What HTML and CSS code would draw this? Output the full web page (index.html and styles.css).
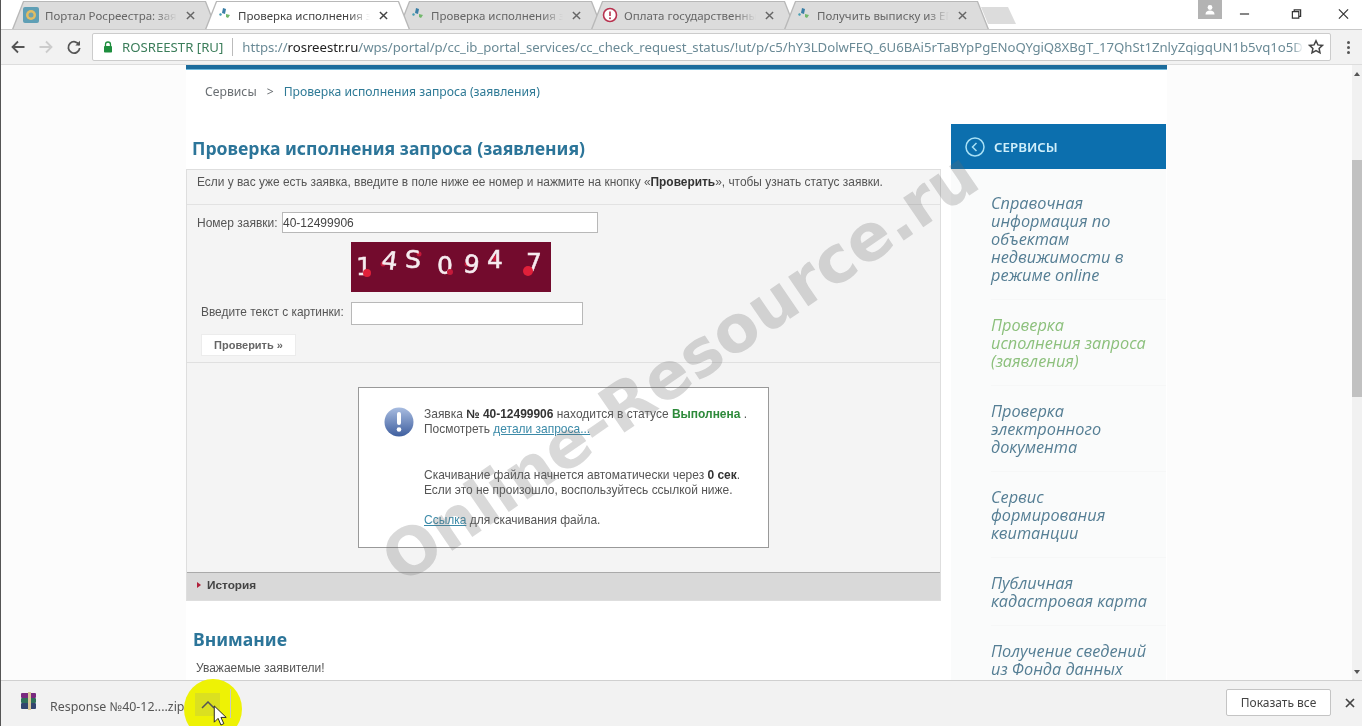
FILE: index.html
```html
<!DOCTYPE html>
<html lang="ru">
<head>
<meta charset="utf-8">
<title>Проверка исполнения запроса</title>
<link rel="stylesheet" href="styles.css">
</head>
<body>
<div class="window">
  <header class="tabstrip">
    <div class="tab">
      <svg class="fav" viewBox="0 0 16 16"><rect width="16" height="16" rx="2" fill="#5f9fb5"/><circle cx="8" cy="8" r="5" fill="#e2bd63"/><circle cx="8" cy="8" r="2.5" fill="#6fa3ae"/></svg>
      <span class="tab-title">Портал Росреестра: зая</span>
      <svg class="tab-x" viewBox="0 0 10 10"><path d="M1 1l8 8M9 1l-8 8"/></svg>
    </div>
    <div class="tab active">
      <svg class="fav" viewBox="0 0 16 16"><path d="M7 1l3 1-1 5-3-1z" fill="#3b7fa6"/><path d="M4 6l2 1-1 2-2-1z" fill="#4aa0b5"/><path d="M10 7l4 1-2 3-2-1z" fill="#73b86c"/></svg>
      <span class="tab-title">Проверка исполнения з</span>
      <svg class="tab-x" viewBox="0 0 10 10"><path d="M1 1l8 8M9 1l-8 8"/></svg>
    </div>
    <div class="tab">
      <svg class="fav" viewBox="0 0 16 16"><path d="M7 1l3 1-1 5-3-1z" fill="#3b7fa6"/><path d="M4 6l2 1-1 2-2-1z" fill="#4aa0b5"/><path d="M10 7l4 1-2 3-2-1z" fill="#73b86c"/></svg>
      <span class="tab-title">Проверка исполнения з</span>
      <svg class="tab-x" viewBox="0 0 10 10"><path d="M1 1l8 8M9 1l-8 8"/></svg>
    </div>
    <div class="tab">
      <svg class="fav" viewBox="0 0 16 16"><circle cx="8" cy="8" r="6.5" fill="#fff" stroke="#b8324f" stroke-width="1.6"/><path d="M8 4.5v4.5" stroke="#b8324f" stroke-width="1.6"/><circle cx="8" cy="11.2" r="1" fill="#b8324f"/></svg>
      <span class="tab-title">Оплата государственны</span>
      <svg class="tab-x" viewBox="0 0 10 10"><path d="M1 1l8 8M9 1l-8 8"/></svg>
    </div>
    <div class="tab">
      <svg class="fav" viewBox="0 0 16 16"><path d="M7 1l3 1-1 5-3-1z" fill="#3b7fa6"/><path d="M4 6l2 1-1 2-2-1z" fill="#4aa0b5"/><path d="M10 7l4 1-2 3-2-1z" fill="#73b86c"/></svg>
      <span class="tab-title">Получить выписку из ЕГ</span>
      <svg class="tab-x" viewBox="0 0 10 10"><path d="M1 1l8 8M9 1l-8 8"/></svg>
    </div>
    <div class="newtab"></div>
    <div class="winctl">
      <div class="avatar"><svg viewBox="0 0 12 12" width="12" height="12"><circle cx="6" cy="3.5" r="2.4" fill="#fff"/><path d="M1.5 10.5c0-3 2-4 4.500-4s4.500 1 4.500 4z" fill="#fff"/></svg></div>
      <svg class="wc wc-min" viewBox="0 0 12 12"><path d="M1 6h10"/></svg>
      <svg class="wc wc-max" viewBox="0 0 12 12"><path d="M1.500 3.500h7v7h-7zM3.500 3.500v-2h7v7h-2"/></svg>
      <svg class="wc wc-close" viewBox="0 0 12 12"><path d="M1 1l10 10M11 1l-10 10"/></svg>
    </div>
  </header>

  <nav class="toolbar">
    <svg class="nav" viewBox="0 0 16 16"><path class="nav-on" d="M14.500 8H2.500M8 2.500L2.500 8 8 13.500"/></svg>
    <svg class="nav" viewBox="0 0 16 16"><path class="nav-off" d="M1.500 8h12M8 2.500L13.500 8 8 13.500"/></svg>
    <svg class="nav" viewBox="0 0 16 16"><path class="nav-on" d="M13.200 6A5.700 5.700 0 1 0 13.700 9"/><path d="M14 1.800v4.700H9.300z" fill="#555"/></svg>
    <div class="omnibox">
      <svg class="lock" viewBox="0 0 10 12"><path d="M2.500 5V3.500a2.500 2.500 0 0 1 5 0V5" fill="none" stroke="#1e8e3e" stroke-width="1.300"/><rect x="1" y="5" width="8" height="6.500" rx=".8" fill="#1e8e3e"/></svg>
      <span class="cert">ROSREESTR [RU]</span>
      <span class="omni-sep"></span>
      <span class="url"><span class="url-dim">https://</span><span class="url-host">rosreestr.ru</span><span class="url-dim">/wps/portal/p/cc_ib_portal_services/cc_check_request_status/!ut/p/c5/hY3LDolwFEQ_6U6BAi5rTaBYpPgENoQYgiQ8XBgT_17QhSt1ZnlyZqigqUN1b5vq1o5D</span></span>
      <svg class="star" viewBox="0 0 16 16"><path d="M8 1.800l1.900 4.100 4.500.5-3.300 3 .9 4.400L8 11.600l-4 2.200.9-4.400-3.300-3 4.500-.5z"/></svg>
    </div>
    <div class="dots"><i></i><i></i><i></i></div>
  </nav>

  <div class="viewport">
    <div class="page">
      <div class="content">
        <main class="main">
          <div class="topline"></div>
          <div class="crumbs"><span class="crumb-root">Сервисы</span><span class="crumb-gt">&gt;</span><a class="crumb-link">Проверка исполнения запроса (заявления)</a></div>
          <h1 class="title title-1">Проверка исполнения запроса (заявления)</h1>
          <section class="panel">
            <div class="intro">Если у вас уже есть заявка, введите в поле ниже ее номер и нажмите на кнопку «<b>Проверить</b>», чтобы узнать статус заявки.</div>
            <div class="form">
              <div class="row-num"><label>Номер заявки:</label><div class="field field-num">40-12499906</div></div>
              <svg class="captcha" viewBox="0 0 200 50">
                <rect width="200" height="50" fill="#730b2d"/>
                <g class="cap-dots">
                  <circle cx="68" cy="12" r="2.500"/>
                  <circle cx="32" cy="22" r="2.500"/>
                  <circle cx="116" cy="22" r="2.500"/>
                  <circle cx="144" cy="16" r="3"/>
                </g>
                <g class="cap-digits">
                  <text x="5" y="33">1</text>
                  <text x="31" y="27" transform="rotate(8 38 18)">4</text>
                  <text x="54" y="26">S</text>
                  <text x="86" y="32">0</text>
                  <text x="113" y="31" transform="rotate(8 121 20)">9</text>
                  <text x="136" y="26">4</text>
                  <text x="175" y="29">7</text>
                </g>
                <circle cx="16" cy="31" r="4" fill="#e0203a"/>
                <circle cx="99" cy="30" r="3" fill="#c41a3a"/>
                <circle cx="177" cy="29" r="5" fill="#e0203a"/>
              </svg>
              <div class="row-cap"><label>Введите текст с картинки:</label><div class="field field-cap"></div></div>
              <div class="check-btn">Проверить »</div>
            </div>
            <div class="result">
              <div class="notice">
                <svg class="info" viewBox="0 0 30 30">
                  <defs><linearGradient id="ig" x1="0" y1="0" x2="0" y2="1"><stop offset="0" stop-color="#a8bce0"/><stop offset="1" stop-color="#3f5f9f"/></linearGradient></defs>
                  <circle cx="15" cy="15" r="14.500" fill="url(#ig)"/>
                  <rect x="13" y="5" width="4" height="13" rx="2" fill="#fff"/>
                  <circle cx="15" cy="22.500" r="2.300" fill="#fff"/>
                </svg>
                <div class="notice-text">
                  <p>Заявка <b>№ 40-12499906</b> находится в статусе <b class="ok">Выполнена</b> .<br>Посмотреть <a>детали запроса...</a></p>
                  <p class="p-dl">Скачивание файла начнется автоматически через <b>0 сек</b>.<br>Если это не произошло, воспользуйтесь ссылкой ниже.</p>
                  <p class="p-link"><a>Ссылка</a> для скачивания файла.</p>
                </div>
              </div>
            </div>
            <div class="history"><span class="tri"></span>История</div>
          </section>
          <h2 class="title title-2">Внимание</h2>
          <p class="dear">Уважаемые заявители!</p>
        </main>
        <aside class="side">
          <div class="side-head">
            <svg class="side-ico" viewBox="0 0 20 20"><circle cx="10" cy="10" r="9" fill="none" stroke="#a8e0f5" stroke-width="1.500"/><path d="M11.500 6l-4 4 4 4" fill="none" stroke="#a8e0f5" stroke-width="1.500"/></svg>
            <span>СЕРВИСЫ</span>
          </div>
          <ul class="side-list">
            <li>Справочная<br>информация по<br>объектам<br>недвижимости в<br>режиме online</li>
            <li class="cur">Проверка<br>исполнения запроса<br>(заявления)</li>
            <li>Проверка<br>электронного<br>документа</li>
            <li>Сервис<br>формирования<br>квитанции</li>
            <li>Публичная<br>кадастровая карта</li>
            <li>Получение сведений<br>из Фонда данных</li>
          </ul>
        </aside>
      </div>
    </div>
    <div class="scrollbar">
      <span class="sb-up"></span>
      <span class="sb-thumb"></span>
      <span class="sb-down"></span>
    </div>
    <div class="watermark">Online-Resource.ru</div>
  </div>

  <footer class="dlbar">
    <svg class="rar" viewBox="0 0 20 20">
      <rect x="2" y="2" width="15" height="5" rx="1" fill="#7a2a80"/>
      <rect x="2" y="7" width="15" height="5" rx="1" fill="#2f6f5a"/>
      <rect x="2" y="12" width="15" height="6" rx="1" fill="#33456f"/>
      <rect x="9" y="1" width="3" height="18" fill="#d9c79a"/>
    </svg>
    <span class="dl-name">Response №40-12....zip</span>
    <span class="dl-sep"></span>
    <div class="showall">Показать все</div>
    <svg class="dl-x" viewBox="0 0 10 10"><path d="M1 1l8 8M9 1l-8 8"/></svg>
    <div class="spot"><span class="spot-btn"><svg viewBox="0 0 14 8" width="14" height="8"><path d="M1 7l6-6 6 6" fill="none" stroke="#555" stroke-width="1.500"/></svg></span></div>
    <svg class="cursor" viewBox="0 0 14 22"><path d="M1 1v17l4-4 3 7 3-1.500-3-6.500h5.500z" fill="#fff" stroke="#222" stroke-width="1"/></svg>
  </footer>
</div>
</body>
</html>
```
FILE: styles.css
```css
* { box-sizing: border-box; }
html, body { margin: 0; height: 100%; overflow: hidden; background: #fff; }
body { font-family: "Liberation Sans", Arial, sans-serif; }

.window {
  width: 1362px; height: 726px;
  display: flex; flex-direction: column;
  border-left: 1px solid #555;
  filter: blur(.35px);
  position: relative;
  overflow: hidden;
}

/* Tabs */
.tabstrip {
  height: 29px; flex: none;
  display: flex; align-items: flex-end;
  padding-left: 11px;
  background: #fff;
  position: relative;
}
.tab {
  width: 205px; height: 28px; margin-right: -12px;
  display: flex; align-items: center;
  padding-left: 11px;
  background: #b8b8b8;
  clip-path: polygon(0 100%, 11px 0, 194px 0, 205px 100%);
  position: relative;
  font: 11.500px "Noto Sans", sans-serif;
  color: #666;
}
.tab::before {
  content: "";
  position: absolute; inset: 0;
  background: #dcdcdc;
  clip-path: polygon(1.500px 100%, 12px 1px, 193px 1px, 203.500px 100%);
}
.tab.active { color: #444; z-index: 2; }
.tab.active::before { background: #fff; }
.fav { width: 16px; height: 16px; flex: none; position: relative; }
.tab-title {
  margin-left: 6px; width: 132px; flex: none;
  white-space: nowrap; position: relative;
  -webkit-mask-image: linear-gradient(90deg, #000 84%, transparent 100%);
  mask-image: linear-gradient(90deg, #000 84%, transparent 100%);
}
.tab-x { width: 9px; height: 9px; margin-left: 9px; flex: none; fill: none; stroke: #666; stroke-width: 1.600; position: relative; }
.tab.active .tab-x { stroke: #444; }
.newtab {
  width: 35px; height: 17px; margin-left: 4px; margin-bottom: 5px;
  background: #dcdcdc;
  clip-path: polygon(0 0, 27px 0, 35px 100%, 7px 100%);
}
.winctl { margin-left: auto; align-self: flex-start; display: flex; height: 24px; }
.avatar {
  width: 24px; height: 19px; background: #b3b3b3;
  display: flex; align-items: center; justify-content: center;
  margin-right: 17px;
}
.wc { width: 11px; height: 12px; margin-top: 8px; fill: none; stroke: #333; stroke-width: 1.300; }
.wc-min { margin-right: 41px; }
.wc-max { margin-right: 36px; }
.wc-close { margin-right: 13px; }

/* Toolbar */
.toolbar {
  height: 36px; flex: none;
  display: flex; align-items: center;
  padding-left: 9px;
  background: #f2f2f2;
  border-top: 1px solid #c9c9c9;
  border-bottom: 1px solid #ddd;
}
.nav { width: 16px; height: 16px; margin-right: 12px; flex: none; fill: none; stroke-width: 1.800; }
.nav-on { stroke: #555; }
.nav-off { stroke: #ccc; }
.omnibox {
  margin-left: -2px; width: 1239px; height: 28px; flex: none;
  display: flex; align-items: center;
  padding: 0 8px;
  background: #fff;
  border: 1px solid #ccc;
  border-radius: 2px;
  font: 13.200px "Noto Sans", sans-serif;
  white-space: nowrap;
}
.lock { width: 10px; height: 12px; flex: none; margin-left: 2px; }
.cert { margin-left: 9px; color: #3b7d5a; }
.omni-sep { width: 1px; height: 18px; background: #bbb; margin: 0 9px; flex: none; }
.url {
  width: 1061px; flex: none; letter-spacing: -.03px;
  -webkit-mask-image: linear-gradient(90deg, #000 99%, transparent 100%);
  mask-image: linear-gradient(90deg, #000 99%, transparent 100%);
}
.url-dim { color: #6a8a96; }
.url-host { color: #222; }
.star { width: 16px; height: 16px; margin-left: 5px; flex: none; fill: none; stroke: #444; stroke-width: 1.500; }
.dots { margin-left: 16px; display: flex; flex-direction: column; gap: 2px; }
.dots i { width: 3px; height: 3px; background: #555; border-radius: 50%; }

/* Viewport */
.viewport {
  flex: none; height: 615px;
  display: flex;
  position: relative;
  overflow: hidden;
  background: #fcfcfc;
}
.page { width: 1351px; display: flex; padding-left: 185px; }
.content { width: 981px; display: flex; background: #fff; flex: none; }
.main { width: 755px; flex: none; }
.topline { width: 981px; height: 5px; background: #1c6c9c; border-bottom: 1px solid #6fb9dc; }
.crumbs { padding: 13px 0 0 19px; height: 34px; font: 12.200px "Noto Sans", sans-serif; color: #6a6f73; display: flex; gap: 10px; }
.crumb-link { color: #2f7a96; }
.title { margin: 0; padding: 0 0 0 6px; font: 700 17.600px/22px "Noto Sans", sans-serif; color: #2c7599; }
.title-1 { margin-top: 33px; }
.panel {
  margin-top: 10px; height: 432px;
  background: #f4f4f4;
  border: 1px solid #dedede;
  display: flex; flex-direction: column;
}
.intro { height: 35px; padding: 5px 0 0 10px; border-bottom: 1px solid #e2e2e2; font-size: 11.920px; color: #555; white-space: nowrap; }
.intro b { color: #333; }
.form { height: 158px; border-bottom: 1px solid #e0e0e0; display: flex; flex-direction: column; position: relative; }
.row-num { display: flex; align-items: center; padding: 7px 0 0 10px; font-size: 12px; color: #555; }
.row-num label { width: 85px; }
.field { background: #fff; border: 1px solid #b8b8b8; font-size: 12px; color: #444; }
.field-num { width: 316px; height: 21px; padding: 3px 0 0 0; }
.captcha { width: 200px; height: 50px; margin: 9px 0 0 164px; display: block; }
.cap-digits { font: 25px "DejaVu Sans", sans-serif; fill: #f6ecef; stroke: #f6ecef; stroke-width: .5px; }
.cap-dots { fill: #c41a3a; }
.row-cap { display: flex; align-items: center; padding: 10px 0 0 14px; font-size: 11.900px; color: #555; }
.row-cap label { width: 150px; margin-bottom: 4px; }
.field-cap { width: 232px; height: 23px; }
.check-btn {
  width: 95px; height: 22px; margin: 9px 0 0 14px;
  background: #fff; border: 1px solid #ececec;
  font-size: 11px; font-weight: 700; color: #666;
  display: flex; align-items: center; justify-content: center;
}
.result { height: 209px; padding-top: 24px; padding-left: 171px; }
.notice {
  width: 411px; height: 161px;
  background: #fff; border: 1px solid #999;
  display: flex; padding: 19px 0 0 25px;
}
.info { width: 30px; height: 30px; flex: none; }
.notice-text { margin-left: 10px; font-size: 11.970px; line-height: 15px; color: #555; }
.notice-text p { margin: 0; }
.notice-text b { color: #333; }
.notice-text b.ok { color: #2d8a3a; }
.notice-text a { color: #3b8aa8; text-decoration: underline; }
.notice-text .p-dl { padding-top: 31px; }
.notice-text .p-link { padding-top: 15px; }
.history {
  height: 28px; background: #d9d9d9; border-top: 1px solid #aaa;
  display: flex; align-items: center; padding: 0 0 4px 10px;
  font-size: 11.800px; font-weight: 700; color: #444;
}
.tri { width: 0; height: 0; border-left: 4px solid #b0203a; border-top: 3px solid transparent; border-bottom: 3px solid transparent; margin-right: 6px; }
.title-2 { margin-top: 27px; padding-left: 7px; }
.dear { margin: 11px 0 0 10px; font-size: 12px; color: #555; }

.side { width: 215px; margin-left: 10px; margin-top: 59px; background: #fafbfb; flex: none; }
.side-head {
  height: 45px; background: #0c6fae;
  display: flex; align-items: center; padding-left: 14px; gap: 9px;
  font: 600 13.300px "Noto Sans", sans-serif; color: #cfeefa;
}
.side-ico { width: 20px; height: 20px; }
.side-list { list-style: none; margin: 0; padding: 9px 0 0 40px; font: italic 16.300px/18px "Open Sans", sans-serif; color: #557e94; white-space: nowrap; }
.side-list li { padding: 16px 0 15px; border-bottom: 1px solid #f6f7f7; }
.side-list li.cur { color: #8cc07c; }

/* Scrollbar */
.scrollbar { width: 10px; flex: none; background: #f1f1f1; display: flex; flex-direction: column; align-items: center; margin-left: auto; position: relative; }
.sb-up { margin-top: 7px; border-bottom: 4px solid #555; border-left: 3px solid transparent; border-right: 3px solid transparent; }
.sb-thumb { width: 10px; height: 237px; background: #c1c1c1; margin-top: 84px; }
.sb-down { margin-top: auto; margin-bottom: 6px; border-top: 4px solid #555; border-left: 3px solid transparent; border-right: 3px solid transparent; }

.watermark {
  position: absolute; left: 679px; top: 302px;
  transform: translate(-50%, -50%) rotate(-34.500deg);
  font: 700 65px "DejaVu Sans", sans-serif;
  color: rgba(110, 110, 110, .26);
  white-space: nowrap;
  pointer-events: none;
}

/* Download bar */
.dlbar {
  flex: 1; position: relative;
  display: flex; align-items: center;
  background: #f2f2f2;
  border-top: 1px solid #d0d0d0;
  padding-left: 18px;
}
.rar { width: 20px; height: 20px; flex: none; margin-top: -6px; }
.dl-name { margin-left: 11px; margin-top: 6px; font: 12.400px "Noto Sans", sans-serif; color: #555; white-space: nowrap; position: relative; z-index: 2; }
.dl-sep { width: 1px; height: 29px; background: #c8c8c8; margin-left: 46px; position: relative; z-index: 2; }
.showall {
  margin-left: auto; width: 105px; height: 27px;
  background: #fff; border: 1px solid #c4c4c4; border-radius: 2px;
  font: 12px "Noto Sans", sans-serif; color: #444;
  display: flex; align-items: center; justify-content: center;
  margin-top: -2px;
}
.dl-x { width: 10px; height: 10px; margin: -2px 7px 0 14px; fill: none; stroke: #444; stroke-width: 1.700; }
.spot {
  position: absolute; left: 183px; top: -2px;
  width: 58px; height: 60px; border-radius: 50%;
  background: #eef205;
  display: flex; align-items: flex-start; padding: 14px 0 0 11px;
}
.spot-btn { width: 25px; height: 23px; background: #dbe020; display: flex; align-items: center; justify-content: center; }
.cursor { position: absolute; left: 212px; top: 24px; width: 14px; height: 21px; }
```
